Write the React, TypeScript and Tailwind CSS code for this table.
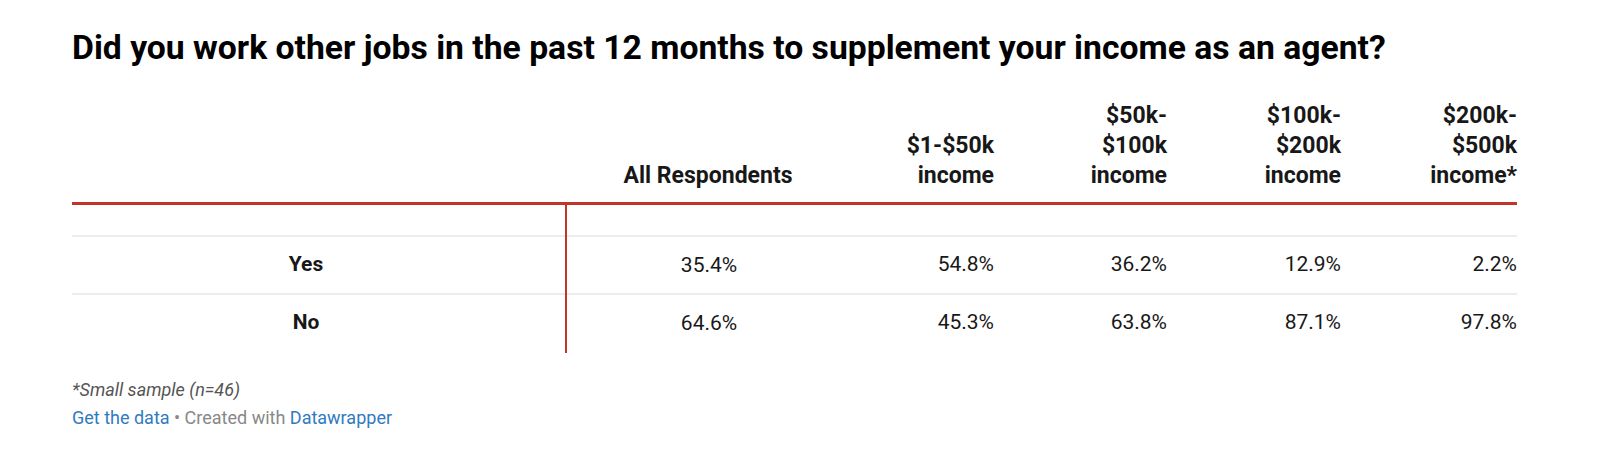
const columns = [
  { label: ["All Respondents"], align: "center" },
  { label: ["$1-$50k", "income"], align: "right" },
  { label: ["$50k-", "$100k", "income"], align: "right" },
  { label: ["$100k-", "$200k", "income"], align: "right" },
  { label: ["$200k-", "$500k", "income*"], align: "right" },
];

const rows = [
  { label: "Yes", values: ["35.4%", "54.8%", "36.2%", "12.9%", "2.2%"] },
  { label: "No", values: ["64.6%", "45.3%", "63.8%", "87.1%", "97.8%"] },
];

const grid = "grid grid-cols-[493px_286px_143px_173px_174px_176px]";

const App = () => {
  return (
    <div className="w-[1614px] h-[456px] bg-white text-[#181818] font-['Roboto',sans-serif] px-[72px] pt-[28px]">
      <h1 className="text-[33.7px] leading-[40px] font-bold text-black">
        Did you work other jobs in the past 12 months to supplement your income as an agent?
      </h1>

      <div className="w-[1445px] mt-[33px]">
        {/* Header */}
        <div className={`${grid} border-b-[3px] border-[#c0342a] pb-[11px]`}>
          <div />
          {columns.map((col, i) => (
            <div
              key={i}
              className={`flex flex-col justify-end text-[23px] leading-[30px] font-bold ${
                col.align === "center" ? "items-center text-center" : "items-end text-right"
              }`}
            >
              {col.label.map((line) => (
                <span key={line}>{line}</span>
              ))}
            </div>
          ))}
        </div>

        {/* Spacer row */}
        <div className={`${grid} h-[32px] border-b-2 border-[#ececec]`}>
          <div />
          <div className="border-l-2 border-[#c0342a] -mb-[2px]" />
        </div>

        {/* Body */}
        {rows.map((row, r) => (
          <div
            key={row.label}
            className={`${grid} ${r < rows.length - 1 ? "h-[58px] border-b-2 border-[#ececec]" : "h-[56px]"}`}
          >
            <div className="flex items-center justify-center pr-[25px] text-[21px] font-bold">{row.label}</div>
            {row.values.map((v, i) => (
              <div
                key={i}
                className={`flex items-center text-[21px] ${
                  i === 0 ? "justify-center border-l-2 border-[#c0342a] -mb-[2px]" : "justify-end"
                }`}
              >
                {v}
              </div>
            ))}
          </div>
        ))}
      </div>

      {/* Footer */}
      <div className="mt-[25px] text-[18px] leading-[28px] italic text-[#555]">*Small sample (n=46)</div>
      <div className="text-[18px] leading-[28px] text-[#888]">
        <span className="text-[#2f7bc1]">Get the data</span> • Created with{" "}
        <span className="text-[#2f7bc1]">Datawrapper</span>
      </div>
    </div>
  );
};

export default App;
